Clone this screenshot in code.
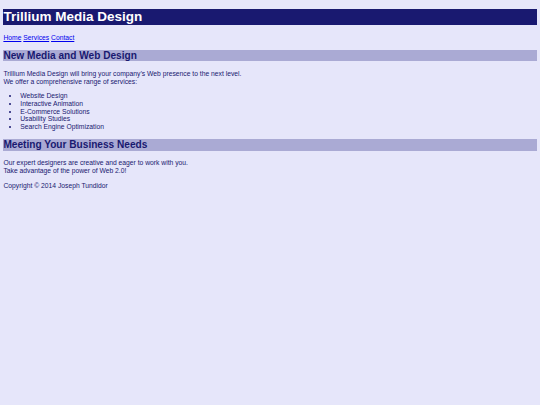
// Scaled-down rendering of a plain HTML page (original 1280 wide, shown at 540).
export default function App() {
  const services = [
    "Website Design",
    "Interactive Animation",
    "E-Commerce Solutions",
    "Usability Studies",
    "Search Engine Optimization",
  ];

  return (
    <div
      className="flow-root min-h-screen bg-[#e6e6fa] px-[3.375px] text-[6.75px] leading-[7.76px] text-[#191970]"
      style={{ fontFamily: '"Liberation Sans", Arial, sans-serif' }}
    >
      <h1 className="my-[9.05px] bg-[#191970] text-[13.5px] leading-[15.5px] font-bold text-white">
        Trillium Media Design
      </h1>

      <nav className="my-[6.75px]">
        <a href="#" className="text-[#0000ee] underline">
          Home
        </a>{" "}
        <a href="#" className="text-[#0000ee] underline">
          Services
        </a>{" "}
        <a href="#" className="text-[#0000ee] underline">
          Contact
        </a>
      </nav>

      <h2 className="my-[8.4px] bg-[#aaaad4] text-[10.125px] leading-[11.64px] font-bold">
        New Media and Web Design
      </h2>
      <p className="my-[6.75px]">
        Trillium Media Design will bring your company’s Web presence to the next level.
        <br />
        We offer a comprehensive range of services:
      </p>
      <ul className="my-[6.75px] list-disc pl-[16.875px]">
        {services.map((s) => (
          <li key={s}>{s}</li>
        ))}
      </ul>

      <h2 className="my-[8.4px] bg-[#aaaad4] text-[10.125px] leading-[11.64px] font-bold">
        Meeting Your Business Needs
      </h2>
      <p className="my-[6.75px]">
        Our expert designers are creative and eager to work with you.
        <br />
        Take advantage of the power of Web 2.0!
      </p>

      <footer className="my-[6.75px]">Copyright © 2014 Joseph Tundidor</footer>
    </div>
  );
}
